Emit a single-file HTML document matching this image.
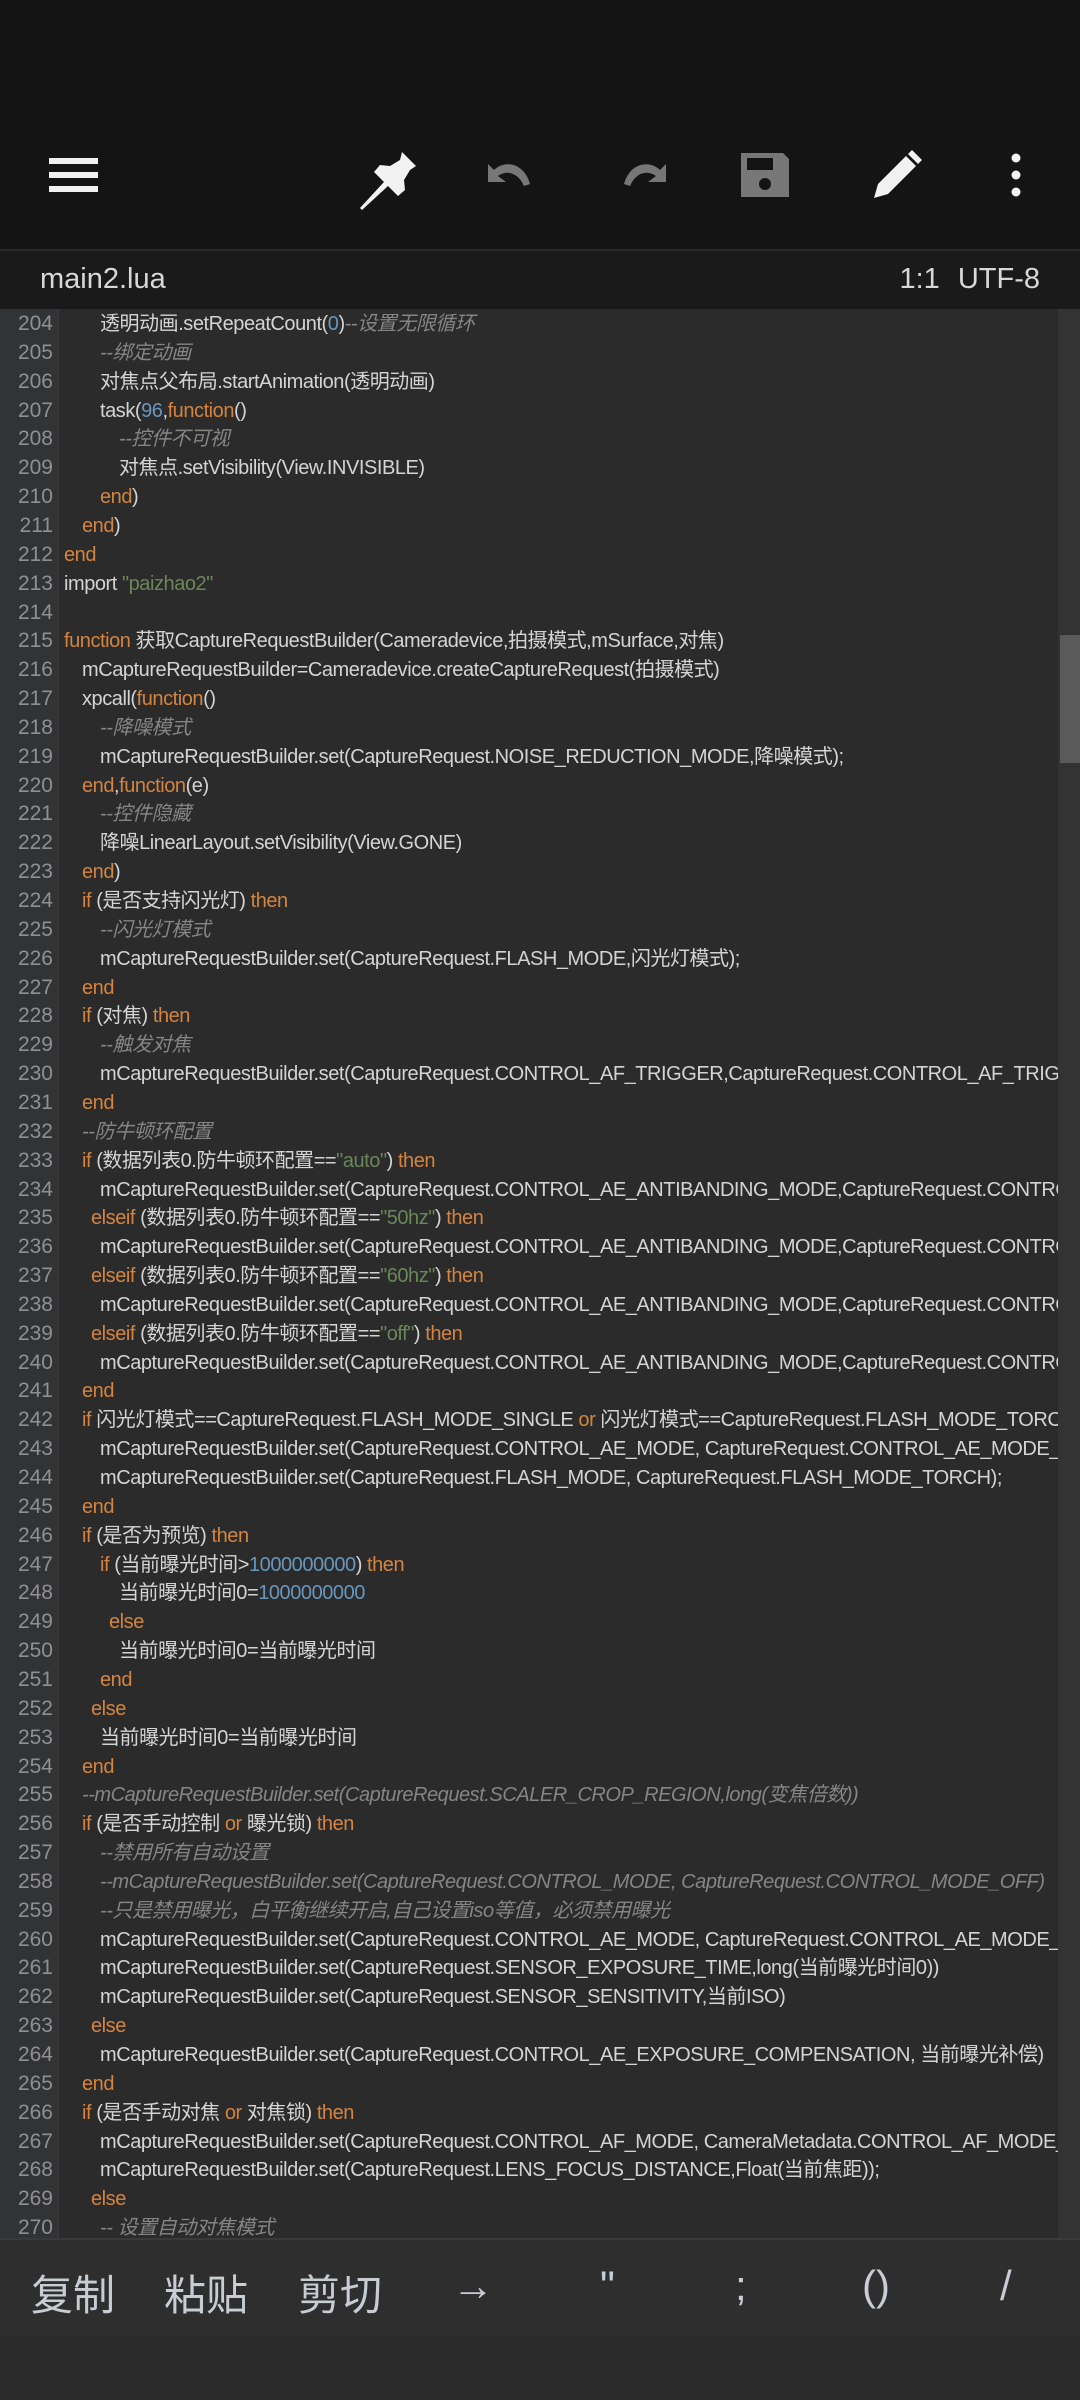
<!DOCTYPE html>
<html><head><meta charset="utf-8"><style>
*{margin:0;padding:0;box-sizing:border-box}
body{width:1080px;height:2400px;background:#2b2b2b;overflow:hidden;position:relative;font-family:"Liberation Sans","Noto Sans CJK SC",sans-serif}
#top{position:absolute;left:0;top:0;width:1080px;height:249px;background:#141414}
#sep{position:absolute;left:0;top:249px;width:1080px;height:2px;background:#2a2a2a}
#title{position:absolute;left:0;top:251px;width:1080px;height:58px;background:#1a1a1a;color:#d8d8d8;font-size:29px}
#title .l{position:absolute;left:40px;top:12px}
#title .r{position:absolute;right:40px;top:12px;word-spacing:10px}
#code{position:absolute;left:0;top:309px;width:1080px;height:1929px;background:#2b2b2b;overflow:hidden}
#gut{position:absolute;left:0;top:0;width:59px;height:100%;background:#313335;border-right:1px solid #3a3a3a}
.ln{position:absolute;left:0;height:28.85px;line-height:28.85px;font-size:20px;letter-spacing:-0.45px;white-space:nowrap;color:#d4d4d4;width:1058px;overflow:hidden}
.ln .n{position:absolute;left:0;width:53px;text-align:right;color:#909090;font-size:21px;letter-spacing:0}
.ln .t{position:absolute;top:0}
.k{color:#d4843e}.nu{color:#6897bb}.s{color:#6a8759}.c{color:#858585;font-style:italic}
#sb{position:absolute;left:1058px;top:0;width:22px;height:100%;background:#333}
#th{position:absolute;left:1060px;top:326px;width:20px;height:128px;background:#5a5a5a}
#bot{position:absolute;left:0;top:2238px;width:1080px;height:98px;background:#2e2e2e;border-top:2px solid #3a3a3a;color:#c8cdd4;font-size:42px}
#bot span{position:absolute;top:22px}
#foot{position:absolute;left:0;top:2336px;width:1080px;height:64px;background:#2b2b2b}
</style></head><body>
<div id="top">
<svg width="1080" height="249" style="position:absolute;left:0;top:0">
<g fill="#f2f2f2"><rect x="49" y="158" width="49" height="6"/><rect x="49" y="172" width="49" height="6"/><rect x="49" y="186" width="49" height="6"/></g>
<path d="M402 152 L416 166 L410 170 L404 180 L405 190 L398 196 L388 186 L362 210 L360 208 L384 182 L374 172 L380 165 L390 166 L400 160 Z" fill="#f2f2f2"/>
<path d="M488 182 L488 164 L494 170 C504 160 524 162 530 184 L524 186 C518 172 506 170 498 176 L506 182 Z" fill="#777"/>
<path d="M666 182 L666 164 L660 170 C650 160 630 162 624 184 L630 186 C636 172 648 170 656 176 L648 182 Z" fill="#777"/>
<path d="M741 153 h42 l6 6 v38 h-48 Z" fill="#777"/><rect x="747" y="158" width="26" height="12" fill="#141414"/><circle cx="765" cy="184" r="6" fill="#141414"/>
<path d="M874 198 l4 -14 l28 -28 l10 10 l-28 28 Z M908 154 l4 -4 l10 10 l-4 4 Z" fill="#f2f2f2"/>
<g fill="#f2f2f2"><circle cx="1016" cy="158" r="4.5"/><circle cx="1016" cy="175" r="4.5"/><circle cx="1016" cy="192" r="4.5"/></g>
</svg>
</div>
<div id="sep"></div>
<div id="title"><span class="l">main2.lua</span><span class="r">1:1 UTF-8</span></div>
<div id="code">
<div id="gut"></div>
<div id="sb"></div><div id="th"></div>
<div id="lines"></div>
</div>
<div id="bot"><span style="left:31px">复制</span><span style="left:164px">粘贴</span><span style="left:298px">剪切</span><span style="left:452px">→</span><span style="left:600px">"</span><span style="left:735px">;</span><span style="left:862px">()</span><span style="left:1000px">/</span></div>
<div id="foot"></div>
<script>
var L=[
[2,'透明动画.setRepeatCount(<span class="nu">0</span>)<span class="c">--设置无限循环</span>'],
[2,'<span class="c">--绑定动画</span>'],
[2,'对焦点父布局.startAnimation(透明动画)'],
[2,'task(<span class="nu">96</span>,<span class="k">function</span>()'],
[3,'<span class="c">--控件不可视</span>'],
[3,'对焦点.setVisibility(View.INVISIBLE)'],
[2,'<span class="k">end</span>)'],
[1,'<span class="k">end</span>)'],
[0,'<span class="k">end</span>'],
[0,'import <span class="s">"paizhao2"</span>'],
[0,''],
[0,'<span class="k">function</span> 获取CaptureRequestBuilder(Cameradevice,拍摄模式,mSurface,对焦)'],
[1,'mCaptureRequestBuilder=Cameradevice.createCaptureRequest(拍摄模式)'],
[1,'xpcall(<span class="k">function</span>()'],
[2,'<span class="c">--降噪模式</span>'],
[2,'mCaptureRequestBuilder.set(CaptureRequest.NOISE_REDUCTION_MODE,降噪模式);'],
[1,'<span class="k">end</span>,<span class="k">function</span>(e)'],
[2,'<span class="c">--控件隐藏</span>'],
[2,'降噪LinearLayout.setVisibility(View.GONE)'],
[1,'<span class="k">end</span>)'],
[1,'<span class="k">if</span> (是否支持闪光灯) <span class="k">then</span>'],
[2,'<span class="c">--闪光灯模式</span>'],
[2,'mCaptureRequestBuilder.set(CaptureRequest.FLASH_MODE,闪光灯模式);'],
[1,'<span class="k">end</span>'],
[1,'<span class="k">if</span> (对焦) <span class="k">then</span>'],
[2,'<span class="c">--触发对焦</span>'],
[2,'mCaptureRequestBuilder.set(CaptureRequest.CONTROL_AF_TRIGGER,CaptureRequest.CONTROL_AF_TRIGGER_START)'],
[1,'<span class="k">end</span>'],
[1,'<span class="c">--防牛顿环配置</span>'],
[1,'<span class="k">if</span> (数据列表0.防牛顿环配置==<span class="s">"auto"</span>) <span class="k">then</span>'],
[2,'mCaptureRequestBuilder.set(CaptureRequest.CONTROL_AE_ANTIBANDING_MODE,CaptureRequest.CONTROL_AE_ANTIBANDING_MODE_AUTO)'],
[1.5,'<span class="k">elseif</span> (数据列表0.防牛顿环配置==<span class="s">"50hz"</span>) <span class="k">then</span>'],
[2,'mCaptureRequestBuilder.set(CaptureRequest.CONTROL_AE_ANTIBANDING_MODE,CaptureRequest.CONTROL_AE_ANTIBANDING_MODE_50HZ)'],
[1.5,'<span class="k">elseif</span> (数据列表0.防牛顿环配置==<span class="s">"60hz"</span>) <span class="k">then</span>'],
[2,'mCaptureRequestBuilder.set(CaptureRequest.CONTROL_AE_ANTIBANDING_MODE,CaptureRequest.CONTROL_AE_ANTIBANDING_MODE_60HZ)'],
[1.5,'<span class="k">elseif</span> (数据列表0.防牛顿环配置==<span class="s">"off"</span>) <span class="k">then</span>'],
[2,'mCaptureRequestBuilder.set(CaptureRequest.CONTROL_AE_ANTIBANDING_MODE,CaptureRequest.CONTROL_AE_ANTIBANDING_MODE_OFF)'],
[1,'<span class="k">end</span>'],
[1,'<span class="k">if</span> 闪光灯模式==CaptureRequest.FLASH_MODE_SINGLE <span class="k">or</span> 闪光灯模式==CaptureRequest.FLASH_MODE_TORCH <span class="k">then</span>'],
[2,'mCaptureRequestBuilder.set(CaptureRequest.CONTROL_AE_MODE, CaptureRequest.CONTROL_AE_MODE_ON)'],
[2,'mCaptureRequestBuilder.set(CaptureRequest.FLASH_MODE, CaptureRequest.FLASH_MODE_TORCH);'],
[1,'<span class="k">end</span>'],
[1,'<span class="k">if</span> (是否为预览) <span class="k">then</span>'],
[2,'<span class="k">if</span> (当前曝光时间&gt;<span class="nu">1000000000</span>) <span class="k">then</span>'],
[3,'当前曝光时间0=<span class="nu">1000000000</span>'],
[2.5,'<span class="k">else</span>'],
[3,'当前曝光时间0=当前曝光时间'],
[2,'<span class="k">end</span>'],
[1.5,'<span class="k">else</span>'],
[2,'当前曝光时间0=当前曝光时间'],
[1,'<span class="k">end</span>'],
[1,'<span class="c">--mCaptureRequestBuilder.set(CaptureRequest.SCALER_CROP_REGION,long(变焦倍数))</span>'],
[1,'<span class="k">if</span> (是否手动控制 <span class="k">or</span> 曝光锁) <span class="k">then</span>'],
[2,'<span class="c">--禁用所有自动设置</span>'],
[2,'<span class="c">--mCaptureRequestBuilder.set(CaptureRequest.CONTROL_MODE, CaptureRequest.CONTROL_MODE_OFF)</span>'],
[2,'<span class="c">--只是禁用曝光，白平衡继续开启,自己设置iso等值，必须禁用曝光</span>'],
[2,'mCaptureRequestBuilder.set(CaptureRequest.CONTROL_AE_MODE, CaptureRequest.CONTROL_AE_MODE_OFF)'],
[2,'mCaptureRequestBuilder.set(CaptureRequest.SENSOR_EXPOSURE_TIME,long(当前曝光时间0))'],
[2,'mCaptureRequestBuilder.set(CaptureRequest.SENSOR_SENSITIVITY,当前ISO)'],
[1.5,'<span class="k">else</span>'],
[2,'mCaptureRequestBuilder.set(CaptureRequest.CONTROL_AE_EXPOSURE_COMPENSATION, 当前曝光补偿)'],
[1,'<span class="k">end</span>'],
[1,'<span class="k">if</span> (是否手动对焦 <span class="k">or</span> 对焦锁) <span class="k">then</span>'],
[2,'mCaptureRequestBuilder.set(CaptureRequest.CONTROL_AF_MODE, CameraMetadata.CONTROL_AF_MODE_OFF)'],
[2,'mCaptureRequestBuilder.set(CaptureRequest.LENS_FOCUS_DISTANCE,Float(当前焦距));'],
[1.5,'<span class="k">else</span>'],
[2,'<span class="c">-- 设置自动对焦模式</span>']
];
var X={0:64,1:82,1.5:91,2:100,2.5:109,3:119};
var h='';
for(var i=0;i<L.length;i++){
 var y=1+i*28.85;
 h+='<div class="ln" style="top:'+y+'px"><span class="n">'+(204+i)+'</span><span class="t" style="left:'+X[L[i][0]]+'px">'+L[i][1]+'</span></div>';
}
document.getElementById('lines').innerHTML=h;
</script>
</body></html>
